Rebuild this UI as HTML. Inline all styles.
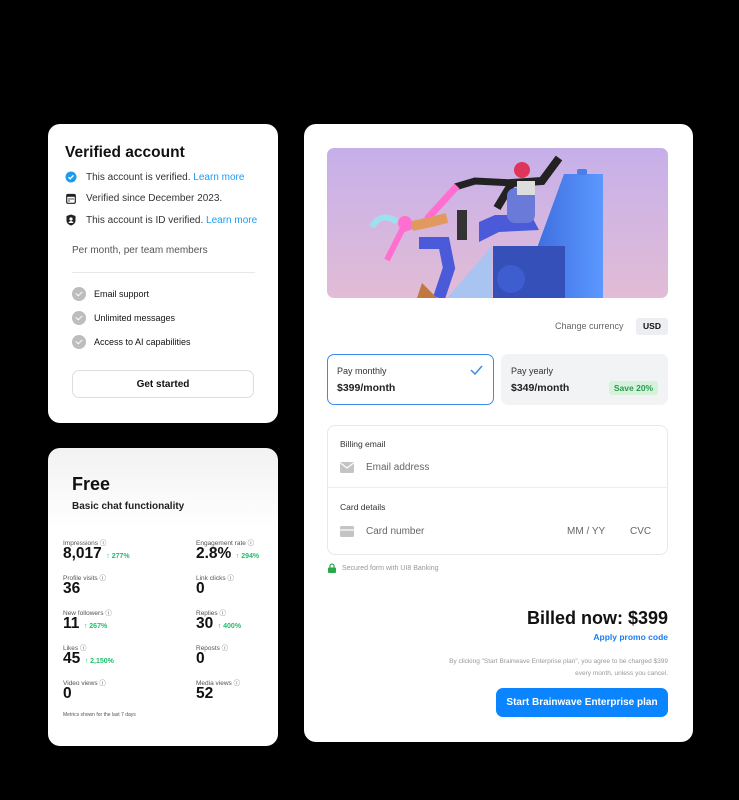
<!DOCTYPE html>
<html><head><meta charset="utf-8"><style>
*{margin:0;padding:0;box-sizing:border-box}
body{width:739px;height:800px;background:#000;position:relative;font-family:"Liberation Sans",sans-serif;overflow:hidden;color:#111}
.a{position:absolute;white-space:nowrap}
.card{position:absolute;background:#fff;border-radius:12px}
.lbl{font-size:6.5px;color:#555}
.val{font-size:15.5px;font-weight:bold;color:#111}
.up{font-size:7px;color:#1fbf6b;font-weight:bold}
.chk{position:absolute;width:14px;height:14px;border-radius:50%;background:#bdbdbd}
.chk:after{content:"";position:absolute;left:4px;top:3.5px;width:5px;height:3px;border-left:1.5px solid #fff;border-bottom:1.5px solid #fff;transform:rotate(-45deg)}
</style></head><body>

<div class="card" style="left:48px;top:124px;width:230px;height:299px"></div>
<div class="a" style="left:65px;top:144px;font-size:15.5px;font-weight:bold">Verified account</div>
<svg class="a" style="left:65px;top:171px" width="12" height="12" viewBox="0 0 12 12"><circle cx="6" cy="6" r="5.5" fill="#1d9bf0"/><path d="M3.5 6.2l1.7 1.6 3.3-3.4" stroke="#fff" stroke-width="1.4" fill="none"/></svg>
<div class="a" style="left:86px;top:172px;font-size:10px;color:#333">This account is verified. <span style="color:#1d9bf0">Learn more</span></div>
<svg class="a" style="left:66px;top:193px" width="10" height="11" viewBox="0 0 10 11"><rect x="0.7" y="1.5" width="8.6" height="8.8" rx="1.3" fill="none" stroke="#222" stroke-width="1.2"/><rect x="0.7" y="1.5" width="8.6" height="2.3" fill="#222"/><circle cx="3" cy="6" r=".7" fill="#222"/><circle cx="5" cy="6" r=".7" fill="#222"/><circle cx="7" cy="6" r=".7" fill="#222"/><circle cx="3" cy="8" r=".7" fill="#222"/></svg>
<div class="a" style="left:86px;top:193px;font-size:10px;color:#333">Verified since December 2023.</div>
<svg class="a" style="left:66px;top:214px" width="10" height="12" viewBox="0 0 10 12"><path d="M5 0.5L9.5 2v4.5c0 2.6-2 4.3-4.5 5-2.5-.7-4.5-2.4-4.5-5V2z" fill="#222"/><circle cx="5" cy="5" r="1.6" fill="#fff"/><path d="M2.4 9c.6-1.4 1.5-2 2.6-2s2 .6 2.6 2" fill="#fff"/></svg>
<div class="a" style="left:86px;top:215px;font-size:10px;color:#333">This account is ID verified. <span style="color:#1d9bf0">Learn more</span></div>
<div class="a" style="left:72px;top:245px;font-size:10px;color:#555">Per month, per team members</div>
<div class="a" style="left:72px;top:272px;width:183px;height:1px;background:#e8e8e8"></div>
<div class="chk" style="left:72px;top:287px"></div><div class="a" style="left:94px;top:289px;font-size:9px">Email support</div>
<div class="chk" style="left:72px;top:311px"></div><div class="a" style="left:94px;top:313px;font-size:9px">Unlimited messages</div>
<div class="chk" style="left:72px;top:335px"></div><div class="a" style="left:94px;top:337px;font-size:9px">Access to AI capabilities</div>
<div class="a" style="left:72px;top:370px;width:182px;height:28px;border:1px solid #ddd;border-radius:7px;text-align:center;line-height:27px;font-size:10px;font-weight:bold">Get started</div>

<div class="card" style="left:48px;top:448px;width:230px;height:298px;background:linear-gradient(#f2f2f2,#fff 80px)"></div>
<div class="a" style="left:72px;top:474px;font-size:18px;font-weight:bold">Free</div>
<div class="a" style="left:72px;top:501px;font-size:10px;font-weight:bold;color:#222">Basic chat functionality</div>

<div class="a lbl" style="left:63px;top:537px">Impressions ⓘ</div><div class="a" style="left:63px;top:545px"><span class="val">8,017</span> <span class="up">↑ 277%</span></div>
<div class="a lbl" style="left:196px;top:537px">Engagement rate ⓘ</div><div class="a" style="left:196px;top:545px"><span class="val">2.8%</span> <span class="up">↑ 294%</span></div>
<div class="a lbl" style="left:63px;top:572px">Profile visits ⓘ</div><div class="a val" style="left:63px;top:580px">36</div>
<div class="a lbl" style="left:196px;top:572px">Link clicks ⓘ</div><div class="a val" style="left:196px;top:580px">0</div>
<div class="a lbl" style="left:63px;top:607px">New followers ⓘ</div><div class="a" style="left:63px;top:615px"><span class="val">11</span> <span class="up">↑ 267%</span></div>
<div class="a lbl" style="left:196px;top:607px">Replies ⓘ</div><div class="a" style="left:196px;top:615px"><span class="val">30</span> <span class="up">↑ 400%</span></div>
<div class="a lbl" style="left:63px;top:642px">Likes ⓘ</div><div class="a" style="left:63px;top:650px"><span class="val">45</span> <span class="up">↑ 2,150%</span></div>
<div class="a lbl" style="left:196px;top:642px">Reposts ⓘ</div><div class="a val" style="left:196px;top:650px">0</div>
<div class="a lbl" style="left:63px;top:677px">Video views ⓘ</div><div class="a val" style="left:63px;top:685px">0</div>
<div class="a lbl" style="left:196px;top:677px">Media views ⓘ</div><div class="a val" style="left:196px;top:685px">52</div>
<div class="a" style="left:63px;top:712px;font-size:5px;color:#555">Metrics shown for the last 7 days</div>

<div class="card" style="left:304px;top:124px;width:389px;height:618px"></div>
<svg class="a" style="left:327px;top:148px;border-radius:7px" width="341" height="150" viewBox="0 0 341 150">
<defs><linearGradient id="g" x1="0" y1="0" x2="0" y2="1"><stop offset="0" stop-color="#c6b0ea"/><stop offset="1" stop-color="#e2bcd6"/></linearGradient>
<linearGradient id="b" x1="0" y1="0" x2="1" y2="0"><stop offset="0" stop-color="#3f6fe0"/><stop offset="1" stop-color="#5b98ff"/></linearGradient></defs>
<rect width="341" height="150" fill="url(#g)"/>
<path d="M237 26h39v124h-66v-50z" fill="url(#b)"/>
<rect x="250" y="21" width="10" height="6" rx="2" fill="#4a7ee8"/>
<path d="M120 150l45-52v52z" fill="#a9c4f0"/>
<rect x="166" y="98" width="72" height="52" fill="#3550b8"/>
<circle cx="184" cy="131" r="14" fill="#3e5ed0"/>
<path d="M168 67h36l8 15-40 2-20 10v-20z" fill="#4a5ad8"/>
<rect x="130" y="62" width="10" height="30" fill="#333"/>
<path d="M170 60l15-25 30-2 17-23" stroke="#222" stroke-width="8" fill="none"/>
<path d="M188 35l-40 -2-20 6" stroke="#222" stroke-width="7" fill="none"/>
<rect x="180" y="40" width="28" height="35" fill="#6a7ad8" rx="8"/>
<circle cx="195" cy="22" r="8" fill="#e0355a"/>
<rect x="190" y="33" width="18" height="14" fill="#ddd"/>
<path d="M130 38l-30 33" stroke="#ff6fcf" stroke-width="7" fill="none"/>
<path d="M100 72l-25 10-15 30" stroke="#ff6fcf" stroke-width="6" fill="none"/>
<path d="M85 78l15 -3 20 -5" stroke="#e09a60" stroke-width="10" fill="none"/>
<path d="M92 95l25 0 5 25-10 30" stroke="#4a5ad8" stroke-width="12" fill="none"/>
<path d="M70 74c-10-8-20-5-25 5" stroke="#9ee0f0" stroke-width="6" fill="none"/>
<circle cx="78" cy="75" r="7" fill="#ff6fcf"/>
<path d="M95 135l15 15h-20z" fill="#c07840"/>
</svg>
<div class="a" style="left:555px;top:321px;font-size:9px;color:#666">Change currency</div>
<div class="a" style="left:636px;top:318px;width:32px;height:17px;background:#eceef1;border-radius:3px;font-size:8.5px;font-weight:bold;text-align:center;line-height:17px">USD</div>
<div class="a" style="left:327px;top:354px;width:167px;height:51px;border:1.5px solid #3a8bf2;border-radius:7px"></div>
<div class="a" style="left:337px;top:366px;font-size:9px;color:#333">Pay monthly</div>
<div class="a" style="left:337px;top:382px;font-size:10.5px;font-weight:bold;color:#222">$399/month</div>
<svg class="a" style="left:470px;top:365px" width="13" height="10" viewBox="0 0 13 10"><path d="M1 5l4 4 7-8" stroke="#3a8bf2" stroke-width="1.5" fill="none"/></svg>
<div class="a" style="left:501px;top:354px;width:167px;height:51px;background:#f2f3f5;border-radius:7px"></div>
<div class="a" style="left:511px;top:366px;font-size:9px;color:#333">Pay yearly</div>
<div class="a" style="left:511px;top:382px;font-size:10.5px;font-weight:bold;color:#222">$349/month</div>
<div class="a" style="left:609px;top:381px;width:49px;height:14px;background:#d6f2dd;border-radius:3px;font-size:8.5px;color:#2a9a4a;text-align:center;line-height:14px;font-weight:bold">Save 20%</div>

<div class="a" style="left:327px;top:425px;width:341px;height:130px;border:1px solid #e6e8ec;border-radius:8px"></div>
<div class="a" style="left:327px;top:487px;width:341px;height:1px;background:#eceef0"></div>
<div class="a" style="left:340px;top:439px;font-size:8.5px;color:#333">Billing email</div>
<svg class="a" style="left:340px;top:462px" width="14" height="11" viewBox="0 0 14 11"><rect width="14" height="11" rx="1.5" fill="#c4c4c4"/><path d="M0.5 1l6.5 5 6.5-5" stroke="#fff" stroke-width="1.2" fill="none"/></svg>
<div class="a" style="left:366px;top:462px;font-size:10px;color:#666">Email address</div>
<div class="a" style="left:340px;top:502px;font-size:8.5px;color:#333">Card details</div>
<svg class="a" style="left:340px;top:526px" width="14" height="11" viewBox="0 0 14 11"><rect width="14" height="11" rx="1.5" fill="#c4c4c4"/><rect y="3" width="14" height="2" fill="#e8e8e8"/></svg>
<div class="a" style="left:366px;top:526px;font-size:10px;color:#666">Card number</div>
<div class="a" style="left:567px;top:526px;font-size:10px;color:#666">MM / YY</div>
<div class="a" style="left:630px;top:526px;font-size:10px;color:#666">CVC</div>
<svg class="a" style="left:328px;top:563px" width="8" height="10" viewBox="0 0 8 10"><path d="M2 4.5V3a2 2 0 014 0v1.5" stroke="#2aa84a" stroke-width="1.2" fill="none"/><rect y="4.5" width="8" height="5.5" rx="1" fill="#2aa84a"/></svg>
<div class="a" style="left:342px;top:565px;font-size:7px;color:#999">Secured form with UI8 Banking</div>
<div class="a" style="right:71px;top:608px;font-size:18px;font-weight:bold">Billed now: $399</div>
<div class="a" style="right:71px;top:632px;font-size:8.5px;font-weight:bold;color:#1a7cf0">Apply promo code</div>
<div class="a" style="right:71px;top:656px;font-size:6.5px;color:#999;text-align:right;line-height:12px">By clicking "Start Brainwave Enterprise plan", you agree to be charged $399<br>every month, unless you cancel.</div>
<div class="a" style="left:496px;top:688px;width:172px;height:29px;background:#0a84ff;border-radius:7px;color:#fff;font-size:10px;font-weight:bold;text-align:center;line-height:29px">Start Brainwave Enterprise plan</div>
</body></html>
